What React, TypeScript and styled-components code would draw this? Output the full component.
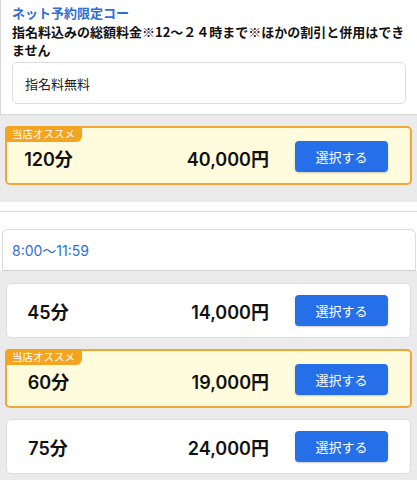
import styled, { createGlobalStyle } from "styled-components";

const GlobalStyle = createGlobalStyle`
  body {
    margin: 0;
    background: #ffffff;
    font-family: "Noto Sans CJK JP", "Noto Sans", sans-serif;
  }
`;

const Page = styled.div`
  width: 417px;
  height: 480px;
  overflow: hidden;
  background: #ebebeb;
`;

const InfoPanel = styled.div`
  background: #ffffff;
  border-left: 1px solid #d8d8d8;
  border-bottom: 1px solid #d8d8d8;
  padding: 4px 11px 10px 11px;
`;

const CourseTitle = styled.div`
  color: #2f6fd3;
  font-size: 13px;
  font-weight: 700;
  line-height: 18px;
`;

const Description = styled.p`
  margin: 1px 0 0;
  color: #111111;
  font-size: 13px;
  font-weight: 700;
  line-height: 18px;
`;

const NoteBox = styled.div`
  margin-top: 3px;
  height: 42px;
  box-sizing: border-box;
  border: 1px solid #dcdcdc;
  border-radius: 5px;
  padding-left: 12px;
  display: flex;
  align-items: center;
  font-size: 13px;
  color: #222222;
`;

const GreyArea = styled.div<{ $top: number; $bottom: number }>`
  padding: ${(p) => p.$top}px 5px ${(p) => p.$bottom}px;
  display: flex;
  flex-direction: column;
  gap: 11px;
`;

const Card = styled.div<{ $featured?: boolean }>`
  position: relative;
  height: ${(p) => (p.$featured ? 59 : 55)}px;
  box-sizing: border-box;
  border: ${(p) => (p.$featured ? "2px solid #f0a73a" : "1px solid #dedede")};
  border-radius: 5px;
  background: ${(p) => (p.$featured ? "#fffbdd" : "#ffffff")};
  display: flex;
  align-items: center;
  margin: 0 ${(p) => (p.$featured ? 0 : 1)}px;
`;

const Badge = styled.span`
  position: absolute;
  top: -2px;
  left: -2px;
  height: 16px;
  padding: 0 7px;
  background: #f5a421;
  color: #ffffff;
  font-size: 10.5px;
  line-height: 16px;
  border-radius: 4px 0 6px 0;
`;

const Minutes = styled.div<{ $featured?: boolean }>`
  width: ${(p) => (p.$featured ? 83 : 82)}px;
  text-align: center;
  font-family: Inter, "Noto Sans CJK JP", sans-serif;
  font-size: 18px;
  font-weight: 600;
  color: #111111;
  padding-top: ${(p) => (p.$featured ? 4 : 0)}px;
`;

const Price = styled.div<{ $featured?: boolean }>`
  flex: 1;
  text-align: right;
  padding-right: 26px;
  font-family: Inter, "Noto Sans CJK JP", sans-serif;
  font-size: 18px;
  font-weight: 600;
  color: #111111;
  padding-top: ${(p) => (p.$featured ? 4 : 0)}px;
`;

const SelectButton = styled.button<{ $featured?: boolean }>`
  width: 93px;
  height: 31px;
  margin-right: 22px;
  margin-top: ${(p) => (p.$featured ? 2 : 0)}px;
  border: none;
  border-radius: 4px;
  background: #2570e9;
  color: #ffffff;
  font-family: inherit;
  font-size: 13px;
  box-shadow: 0 1px 2px rgba(0, 0, 0, 0.2);
`;

const SectionEnd = styled.div`
  height: 9px;
  background: #ffffff;
  border-bottom: 1px solid #d8d8d8;
`;

const TimeSection = styled.div`
  background: #ffffff;
  padding: 17px 1px 0 2px;
`;

const TimeHeader = styled.div`
  height: 42px;
  box-sizing: border-box;
  border: 1px solid #dcdcdc;
  border-bottom-color: #d0d0d0;
  border-radius: 6px 6px 0 0;
  padding-left: 9px;
  display: flex;
  align-items: center;
  color: #2f6fd3;
  font-family: Inter, "Noto Sans CJK JP", sans-serif;
  font-size: 14px;
`;

type Plan = { minutes: string; price: string; featured?: boolean };

const plans: Plan[] = [
  { minutes: "45分", price: "14,000円" },
  { minutes: "60分", price: "19,000円", featured: true },
  { minutes: "75分", price: "24,000円" },
];

function PlanCard({ plan }: { plan: Plan }) {
  return (
    <Card $featured={plan.featured}>
      {plan.featured && <Badge>当店オススメ</Badge>}
      <Minutes $featured={plan.featured}>{plan.minutes}</Minutes>
      <Price $featured={plan.featured}>{plan.price}</Price>
      <SelectButton $featured={plan.featured}>選択する</SelectButton>
    </Card>
  );
}

export default function App() {
  return (
    <Page>
      <GlobalStyle />
      <InfoPanel>
        <CourseTitle>ネット予約限定コー</CourseTitle>
        <Description>指名料込みの総額料金※12〜２４時まで※ほかの割引と併用はできません</Description>
        <NoteBox>指名料無料</NoteBox>
      </InfoPanel>
      <GreyArea $top={11} $bottom={17}>
        <PlanCard plan={{ minutes: "120分", price: "40,000円", featured: true }} />
      </GreyArea>
      <SectionEnd />
      <TimeSection>
        <TimeHeader>8:00〜11:59</TimeHeader>
      </TimeSection>
      <GreyArea $top={12} $bottom={12}>
        {plans.map((plan) => (
          <PlanCard key={plan.minutes} plan={plan} />
        ))}
      </GreyArea>
    </Page>
  );
}
